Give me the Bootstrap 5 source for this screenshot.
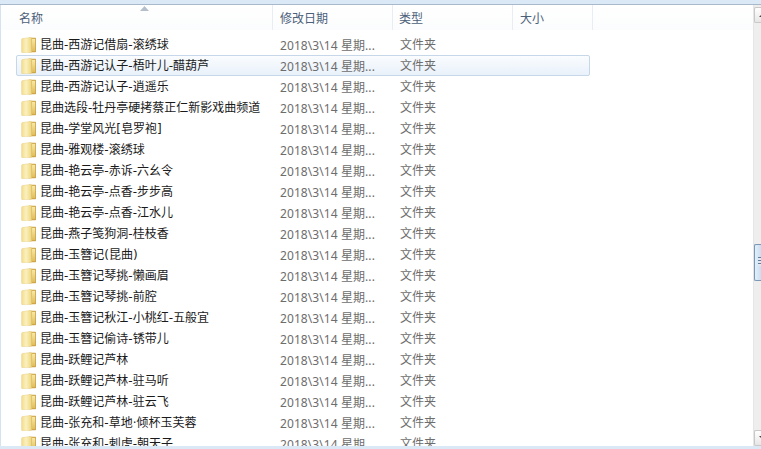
<!DOCTYPE html>
<html lang="zh">
<head>
<meta charset="utf-8">
<title>昆曲</title>
<link href="https://cdn.jsdelivr.net/npm/bootstrap@5.3.0/dist/css/bootstrap.min.css" rel="stylesheet">
<style>
html,body{height:449px;overflow:hidden;background:#fff;}
body{font-family:"DejaVu Sans","Noto Sans CJK SC",sans-serif;font-size:12px;line-height:21px;color:#1a1a1a;}
.topstrip{height:5px;background:#dbe8f6;border-bottom:1px solid #a9b9cc;flex:none;}
.botstrip{height:3px;background:#dbe8f6;flex:none;}
.midarea{flex:1;min-height:0;border-left:1px solid #d6e2ef;}
.listarea{flex:1;min-width:0;overflow:hidden;position:relative;}
.headrow{height:25px;padding-left:12px;color:#4c607a;line-height:29px;background:linear-gradient(#fff,#fbfcfd);position:relative;}
.hcell{padding-left:6px;border-right:1px solid #e8edf3;flex:none;}
.hname{width:260px;}
.hdate{width:120px;padding-left:7px;}
.htype{width:120px;}
.hsize{width:80px;padding-left:7px;}
.sortmark{position:absolute;left:139px;top:1px;width:9px;height:5px;}
.filerows{padding-left:15px;padding-top:4px;}
.frow{height:21px;width:574px;border:1px solid transparent;border-radius:2px;white-space:nowrap;}
.frow.sel{border-color:#c6d7ea;background:linear-gradient(#fafcfe,#e9f1fa);}
.fico{width:16px;height:16px;margin-left:4px;flex:none;}
.fname{width:240px;margin-left:3px;flex:none;padding-top:2px;line-height:19px;}
.fdate{width:120px;flex:none;color:#6d6d6d;padding-top:2px;line-height:19px;font-family:"Noto Sans","Noto Sans CJK SC",sans-serif;letter-spacing:.08px;}
.ftype{color:#6d6d6d;padding-top:2px;line-height:19px;}
.sbar{width:8px;flex:none;background:#eeeeee;position:relative;border-left:1px solid #e6e6e6;}
.sbtn{height:16px;background:linear-gradient(#fff,#e6e6e6);border:1px solid #c8c8c8;border-right:0;border-radius:2px 0 0 2px;position:absolute;left:0;right:0;}
.sbtn.up{top:2px;}
.sbtn.dn{bottom:0;}
.sthumb{position:absolute;left:0;right:0;top:239px;height:37px;background:linear-gradient(90deg,#e3effa,#c9dff2);border:1px solid #7a97b5;border-right:0;border-radius:2px 0 0 2px;}
.grip{position:absolute;left:3px;top:12px;width:5px;height:9px;background:repeating-linear-gradient(#5f7f9e 0 1px,#dfeaf5 1px 3px);}
.tri{position:absolute;left:4px;top:5px;width:8px;height:4px;}
.defsholder{flex:none;}
</style>
</head>
<body class="d-flex flex-column">
<svg width="0" height="0" class="defsholder">
<defs>
<linearGradient id="fg" x1="0" y1="0" x2="0" y2="1"><stop offset="0" stop-color="#f8e9a6"/><stop offset="1" stop-color="#e0bd5c"/></linearGradient>
<linearGradient id="fd" x1="0" y1="0" x2="1" y2="0"><stop offset="0" stop-color="#f3dd8a"/><stop offset=".45" stop-color="#fbf1bf"/><stop offset="1" stop-color="#efd67e"/></linearGradient>
<symbol id="folder" viewBox="0 0 16 16">
<path d="M8 .8h6c.7 0 1 .4 1 1v12.4c0 .6-.3 1-1 1H8z" fill="#c9a245"/>
<path d="M11 1.8h3.2v12.4H11z" fill="url(#fg)"/>
<path d="M1.4 1.6 9.6.4c.6-.1 1 .2 1 .8v13.6c0 .5-.3.8-.8.8l-8.2.2c-.6 0-1-.3-1-.9V2.4c0-.4.3-.7.8-.8z" fill="url(#fd)" stroke="#e3c878" stroke-width=".4"/>
</symbol>
</defs>
</svg>
<div class="topstrip"></div>
<div class="midarea d-flex">
<div class="listarea">
<div class="headrow d-flex">
<div class="hcell hname">名称</div>
<div class="hcell hdate">修改日期</div>
<div class="hcell htype">类型</div>
<div class="hcell hsize">大小</div>
<svg class="sortmark" viewBox="0 0 9 5"><path d="M4.5 0 9 5H0z" fill="#b4bfcc"/></svg>
</div>
<div class="filerows">
<div class="frow d-flex align-items-center"><svg class="fico"><use href="#folder"/></svg><span class="fname">昆曲-西游记借扇-滚绣球</span><span class="fdate">2018\3\14 星期...</span><span class="ftype">文件夹</span></div>
<div class="frow sel d-flex align-items-center"><svg class="fico"><use href="#folder"/></svg><span class="fname">昆曲-西游记认子-梧叶儿-醋葫芦</span><span class="fdate">2018\3\14 星期...</span><span class="ftype">文件夹</span></div>
<div class="frow d-flex align-items-center"><svg class="fico"><use href="#folder"/></svg><span class="fname">昆曲-西游记认子-逍遥乐</span><span class="fdate">2018\3\14 星期...</span><span class="ftype">文件夹</span></div>
<div class="frow d-flex align-items-center"><svg class="fico"><use href="#folder"/></svg><span class="fname">昆曲选段-牡丹亭硬拷蔡正仁新影戏曲频道</span><span class="fdate">2018\3\14 星期...</span><span class="ftype">文件夹</span></div>
<div class="frow d-flex align-items-center"><svg class="fico"><use href="#folder"/></svg><span class="fname">昆曲-学堂风光[皂罗袍]</span><span class="fdate">2018\3\14 星期...</span><span class="ftype">文件夹</span></div>
<div class="frow d-flex align-items-center"><svg class="fico"><use href="#folder"/></svg><span class="fname">昆曲-雅观楼-滚绣球</span><span class="fdate">2018\3\14 星期...</span><span class="ftype">文件夹</span></div>
<div class="frow d-flex align-items-center"><svg class="fico"><use href="#folder"/></svg><span class="fname">昆曲-艳云亭-赤诉-六幺令</span><span class="fdate">2018\3\14 星期...</span><span class="ftype">文件夹</span></div>
<div class="frow d-flex align-items-center"><svg class="fico"><use href="#folder"/></svg><span class="fname">昆曲-艳云亭-点香-步步高</span><span class="fdate">2018\3\14 星期...</span><span class="ftype">文件夹</span></div>
<div class="frow d-flex align-items-center"><svg class="fico"><use href="#folder"/></svg><span class="fname">昆曲-艳云亭-点香-江水儿</span><span class="fdate">2018\3\14 星期...</span><span class="ftype">文件夹</span></div>
<div class="frow d-flex align-items-center"><svg class="fico"><use href="#folder"/></svg><span class="fname">昆曲-燕子笺狗洞-桂枝香</span><span class="fdate">2018\3\14 星期...</span><span class="ftype">文件夹</span></div>
<div class="frow d-flex align-items-center"><svg class="fico"><use href="#folder"/></svg><span class="fname">昆曲-玉簪记(昆曲)</span><span class="fdate">2018\3\14 星期...</span><span class="ftype">文件夹</span></div>
<div class="frow d-flex align-items-center"><svg class="fico"><use href="#folder"/></svg><span class="fname">昆曲-玉簪记琴挑-懒画眉</span><span class="fdate">2018\3\14 星期...</span><span class="ftype">文件夹</span></div>
<div class="frow d-flex align-items-center"><svg class="fico"><use href="#folder"/></svg><span class="fname">昆曲-玉簪记琴挑-前腔</span><span class="fdate">2018\3\14 星期...</span><span class="ftype">文件夹</span></div>
<div class="frow d-flex align-items-center"><svg class="fico"><use href="#folder"/></svg><span class="fname">昆曲-玉簪记秋江-小桃红-五般宜</span><span class="fdate">2018\3\14 星期...</span><span class="ftype">文件夹</span></div>
<div class="frow d-flex align-items-center"><svg class="fico"><use href="#folder"/></svg><span class="fname">昆曲-玉簪记偷诗-锈带儿</span><span class="fdate">2018\3\14 星期...</span><span class="ftype">文件夹</span></div>
<div class="frow d-flex align-items-center"><svg class="fico"><use href="#folder"/></svg><span class="fname">昆曲-跃鲤记芦林</span><span class="fdate">2018\3\14 星期...</span><span class="ftype">文件夹</span></div>
<div class="frow d-flex align-items-center"><svg class="fico"><use href="#folder"/></svg><span class="fname">昆曲-跃鲤记芦林-驻马听</span><span class="fdate">2018\3\14 星期...</span><span class="ftype">文件夹</span></div>
<div class="frow d-flex align-items-center"><svg class="fico"><use href="#folder"/></svg><span class="fname">昆曲-跃鲤记芦林-驻云飞</span><span class="fdate">2018\3\14 星期...</span><span class="ftype">文件夹</span></div>
<div class="frow d-flex align-items-center"><svg class="fico"><use href="#folder"/></svg><span class="fname">昆曲-张充和-草地·倾杯玉芙蓉</span><span class="fdate">2018\3\14 星期...</span><span class="ftype">文件夹</span></div>
<div class="frow d-flex align-items-center"><svg class="fico"><use href="#folder"/></svg><span class="fname">昆曲-张充和-刺虎-朝天子</span><span class="fdate">2018\3\14 星期...</span><span class="ftype">文件夹</span></div>
</div>
</div>
<div class="sbar">
<div class="sbtn up"><svg class="tri" viewBox="0 0 8 4"><path d="M4 0 8 4H0z" fill="#444"/></svg></div>
<div class="sthumb"><div class="grip"></div></div>
<div class="sbtn dn"><svg class="tri" viewBox="0 0 8 4"><path d="M0 0h8L4 4z" fill="#444"/></svg></div>
</div>
</div>
<div class="botstrip"></div>
</body>
</html>
